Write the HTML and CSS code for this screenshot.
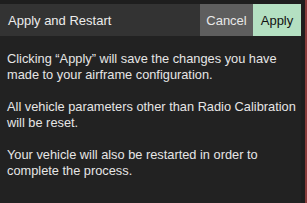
FILE: index.html
```html
<!DOCTYPE html>
<html lang="en">
<head>
    <meta charset="UTF-8">
    <title>Apply and Restart</title>
    <link rel="stylesheet" href="styles.css">
</head>
<body>
    <div class="dialog">
        <div class="header">
            <span class="title">Apply and Restart</span>
            <button class="btn cancel">Cancel</button>
            <button class="btn apply">Apply</button>
        </div>
        <div class="content">
            <p>Clicking “Apply” will save the changes you have made to your airframe configuration.</p>
            <p>All vehicle parameters other than Radio Calibration will be reset.</p>
            <p>Your vehicle will also be restarted in order to complete the process.</p>
        </div>
    </div>
</body>
</html>
```

FILE: styles.css
```css
* {
    margin: 0;
    padding: 0;
    box-sizing: border-box;
}

body {
    width: 307px;
    height: 203px;
    background: #222;
    font-family: 'Liberation Sans', Arial, sans-serif;
    font-size: 13px;
    color: #e6e6e6;
    overflow: hidden;
}

.dialog {
    height: 203px;
    padding-top: 4px;
    padding-right: 4px;
    background: #1e1e1e;
    border-right: 2px solid #8a3b3b;
    display: flex;
    flex-direction: column;
}

.header {
    height: 32px;
    display: flex;
    align-items: stretch;
    background: #333;
}

.title {
    flex: 1;
    display: flex;
    align-items: center;
    padding-left: 8px;
    color: #ececec;
}

.btn {
    border: none;
    font-family: inherit;
    font-size: 13px;
    padding: 0 5px;
}

.cancel {
    width: 53px;
    background: #5e5e5e;
    color: #e8e8e8;
}

.apply {
    width: 48px;
    background: #b4e0c2;
    color: #111;
}

.content {
    flex: 1;
    background: #222;
    padding: 15px 0 0 7px;
    font-size: 12.8px;
    line-height: 16px;
}

.content p {
    margin-bottom: 16px;
}
```
